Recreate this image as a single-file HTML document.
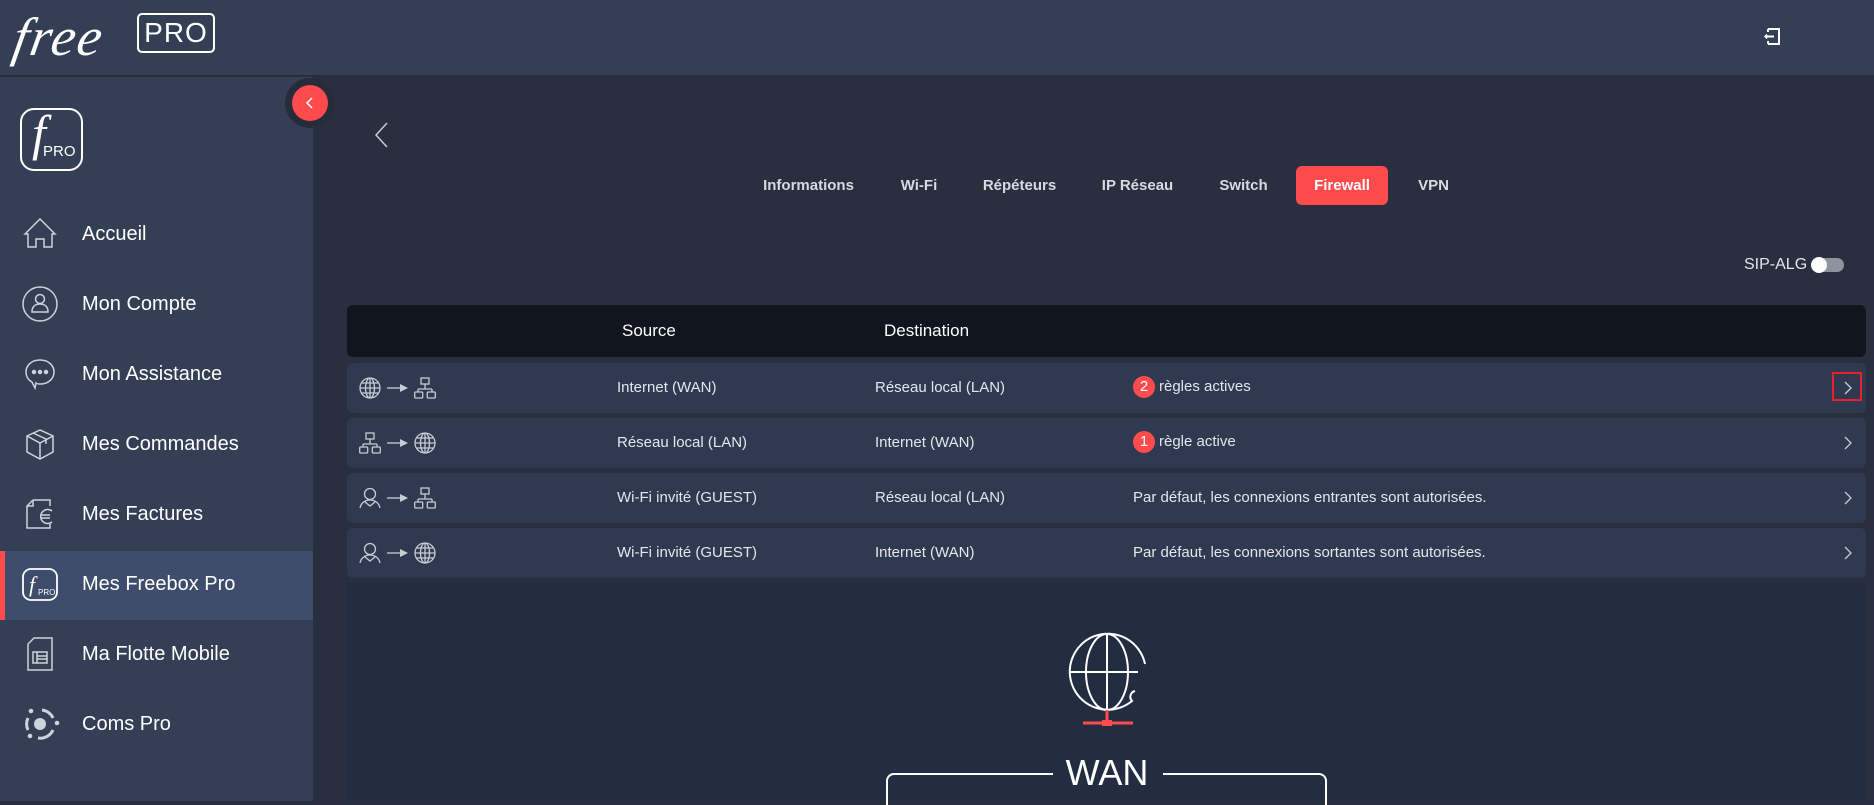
<!DOCTYPE html>
<html><head><meta charset="utf-8"><style>
*{margin:0;padding:0;box-sizing:border-box}
body{width:1874px;height:801px;overflow:hidden;background:#292f3e;font-family:"Liberation Sans",sans-serif;position:relative;color:#fff}
.hdr{position:absolute;left:0;top:0;width:1874px;height:76px;background:#343f56;border-bottom:1px solid #262c3a}
.side{position:absolute;left:0;top:77px;width:313px;height:724px;background:#343f56}
.main{position:absolute;left:313px;top:77px;width:1561px;height:724px;background:#292f3e}
.abs{position:absolute}
.mi{position:absolute;left:0;width:313px;height:70px;display:flex;align-items:center;font-size:20px;color:#fff}
.mi span{position:absolute;left:82px}
.mi svg{position:absolute;left:20px}
.tab{position:absolute;top:166px;height:39px;line-height:39px;font-size:15px;font-weight:bold;color:#d6dae2;text-align:center}
.row{position:absolute;left:347px;width:1519px;height:50px;background:#2f3a51;border-radius:6px;font-size:15px;color:#e3e6ec}
.row .t{position:absolute;top:16px}
.badge{display:inline-block;width:22px;height:22px;border-radius:11px;background:#ff4b4b;color:#fff;text-align:center;line-height:22px;font-size:15px;margin-right:4px}
</style></head><body>
<div class="hdr">
  <div class="abs" style="left:14px;top:6px;font-family:'Liberation Serif',serif;font-style:italic;font-size:54px;color:#fff;letter-spacing:2px;transform:skewX(-10deg)">free</div>
  <div class="abs" style="left:137px;top:13px;width:78px;height:40px;border:2.5px solid #fff;border-radius:5px;font-size:28px;line-height:35px;text-align:center;letter-spacing:1px">PRO</div>
  <svg class="abs" style="left:1764px;top:26px" width="20" height="20" viewBox="0 0 20 20" fill="none" stroke="#fff" stroke-width="2"><path d="M4 3h11v15H4M4 3v3M4 15v3M1 10.5h9"/><path d="M3 8.5l-2 2 2 2" stroke-width="1.5"/></svg>
</div>
<div class="side">
  <div class="abs" style="left:20px;top:31px;width:63px;height:63px;border:2.5px solid #fff;border-radius:14px">
    <div class="abs" style="left:10px;top:-6px;font-family:'Liberation Serif',serif;font-style:italic;font-size:50px">f</div>
    <div class="abs" style="left:21px;top:33px;font-size:15px">PRO</div>
  </div>
  <div class="mi" style="top:122px"><svg width="40" height="40" viewBox="0 0 40 40" fill="none" stroke="#cfd3da" stroke-width="1.5"><path d="M5 20L20 5l15 15h-3v13h-8v-8h-8v8H8V20z"/></svg><span>Accueil</span></div>
  <div class="mi" style="top:192px"><svg width="40" height="40" viewBox="0 0 40 40" fill="none" stroke="#cfd3da" stroke-width="1.5"><circle cx="20" cy="20" r="17"/><circle cx="20" cy="15" r="4.5"/><path d="M12 28c0-6 4-8 8-8s8 2 8 8z"/></svg><span>Mon Compte</span></div>
  <div class="mi" style="top:262px"><svg width="40" height="40" viewBox="0 0 40 40" fill="none" stroke="#cfd3da" stroke-width="1.5"><path d="M20 6c8 0 14 5 14 12s-6 12-14 12c-2 0-3 0-4-1l-1 5-3-6c-4-2-6-6-6-10 0-7 6-12 14-12z"/><circle cx="14" cy="18" r="1.5" fill="#cfd3da"/><circle cx="20" cy="18" r="1.5" fill="#cfd3da"/><circle cx="26" cy="18" r="1.5" fill="#cfd3da"/></svg><span>Mon Assistance</span></div>
  <div class="mi" style="top:332px"><svg width="40" height="40" viewBox="0 0 40 40" fill="none" stroke="#cfd3da" stroke-width="1.5"><path d="M7 12l13-6 13 6v16l-13 7-13-7zM7 12l13 7 13-7M20 19v16M13 9l13 6v5"/></svg><span>Mes Commandes</span></div>
  <div class="mi" style="top:402px"><svg width="40" height="40" viewBox="0 0 40 40" fill="none" stroke="#cfd3da" stroke-width="1.5"><path d="M13 6h17v6M13 6l-6 6v22h23v-4M7 12h6V6"/><path d="M32 17a7 7 0 1 0 0 11M21 21h9M21 24h9"/></svg><span>Mes Factures</span></div>
  <div class="abs" style="left:0;top:474px;width:313px;height:69px;background:#3e4d6b;border-left:5px solid #ff4b4b"></div>
  <div class="mi" style="top:472px"><svg width="40" height="40" viewBox="0 0 40 40" fill="none" stroke="#fff" stroke-width="1.8"><rect x="3" y="5" width="34" height="31" rx="8"/><text x="9" y="28" font-family="Liberation Serif" font-style="italic" font-size="22" fill="#fff" stroke="none">f</text><text x="18" y="31" font-size="8" fill="#fff" stroke="none">PRO</text></svg><span>Mes Freebox Pro</span></div>
  <div class="mi" style="top:542px"><svg width="40" height="40" viewBox="0 0 40 40" fill="none" stroke="#cfd3da" stroke-width="1.5"><path d="M14 4h18v32H8V10z"/><rect x="13" y="18" width="14" height="11"/><path d="M17 18v11M17 22h10M17 25h10"/></svg><span>Ma Flotte Mobile</span></div>
  <div class="mi" style="top:612px"><svg width="40" height="40" viewBox="0 0 40 40" fill="none" stroke="#cfd3da" stroke-width="3"><circle cx="20" cy="20" r="6" fill="#cfd3da" stroke="none"/><path d="M8 14a14 14 0 0 0 0 12M22 6a14 14 0 0 1 11 8M33 26a14 14 0 0 1-15 8"/><circle cx="11" cy="7" r="2.3" fill="#cfd3da" stroke="none"/><circle cx="37" cy="19" r="2.3" fill="#cfd3da" stroke="none"/><circle cx="10" cy="32" r="2.3" fill="#cfd3da" stroke="none"/></svg><span>Coms Pro</span></div>
</div>
<div class="main"></div>
<div class="abs" style="left:285px;top:78px;width:50px;height:50px;border-radius:25px;background:#262c3a"></div>
<div class="abs" style="left:292px;top:85px;width:36px;height:36px;border-radius:18px;background:#ff4b4b"></div>
<svg class="abs" style="left:302px;top:95px" width="16" height="16" viewBox="0 0 16 16" fill="none" stroke="#fff" stroke-width="1.5"><path d="M10 3L5 8l5 5"/></svg>
<svg class="abs" style="left:372px;top:121px" width="20" height="28" viewBox="0 0 20 28" fill="none" stroke="#c8ccd4" stroke-width="1.5"><path d="M15 2L4 14l11 12"/></svg>
<div class="tab" style="left:755px;width:107px">Informations</div>
<div class="tab" style="left:892px;width:54px">Wi-Fi</div>
<div class="tab" style="left:976px;width:87px">Répéteurs</div>
<div class="tab" style="left:1094px;width:87px">IP Réseau</div>
<div class="tab" style="left:1211px;width:65px">Switch</div>
<div class="tab" style="left:1296px;width:92px;background:#ff4b4b;border-radius:6px;color:#fff">Firewall</div>
<div class="tab" style="left:1409px;width:49px">VPN</div>
<div class="abs" style="left:1744px;top:256px;font-size:16px;color:#e3e6ec">SIP-ALG</div>
<div class="abs" style="left:1812px;top:258px;width:32px;height:14px;border-radius:7px;background:#8e939e"></div>
<div class="abs" style="left:1811px;top:257px;width:16px;height:16px;border-radius:8px;background:#fff"></div>
<div class="abs" style="left:347px;top:305px;width:1519px;height:52px;background:#11151e;border-radius:6px;font-size:17px">
  <div class="abs" style="left:275px;top:16px">Source</div>
  <div class="abs" style="left:537px;top:16px">Destination</div>
</div>
<svg width="0" height="0" style="position:absolute"><defs>
<g id="gl" fill="none" stroke="#c8ccd4" stroke-width="1.3"><circle cx="11" cy="11" r="10"/><ellipse cx="11" cy="11" rx="4.5" ry="10"/><path d="M1 11h20M3 6h16M3 16h16M11 1v20"/></g>
<g id="ln" fill="none" stroke="#c8ccd4" stroke-width="1.3"><rect x="7" y="1" width="8" height="6"/><path d="M11 7v5M4 12h14M4 12v3M18 12v3"/><rect x="0.7" y="15" width="8" height="6" rx="1"/><rect x="13.3" y="15" width="8" height="6" rx="1"/></g>
<g id="us" fill="none" stroke="#c8ccd4" stroke-width="1.3"><circle cx="11" cy="7" r="5.5"/><path d="M1 21c1-5 5-8 10-8s9 3 10 8M6 15l5 4 5-4"/></g>
<g id="ar"><path d="M0 11h15" stroke="#c8ccd4" stroke-width="1.3"/><path d="M13 7l8 4-8 4z" fill="#c8ccd4"/></g>
</defs></svg>
<div class="row" style="top:363px"><svg class="abs" style="left:12px;top:14px" width="80" height="22"><use href="#gl"/><use href="#ar" x="28"/><use href="#ln" x="55"/></svg><div class="t" style="left:270px">Internet (WAN)</div><div class="t" style="left:528px">Réseau local (LAN)</div><div class="t" style="left:786px;top:13px"><span class="badge">2</span>règles actives</div></div>
<div class="row" style="top:418px"><svg class="abs" style="left:12px;top:14px" width="80" height="22"><use href="#ln"/><use href="#ar" x="28"/><use href="#gl" x="55"/></svg><div class="t" style="left:270px">Réseau local (LAN)</div><div class="t" style="left:528px">Internet (WAN)</div><div class="t" style="left:786px;top:13px"><span class="badge">1</span>règle active</div></div>
<div class="row" style="top:473px"><svg class="abs" style="left:12px;top:14px" width="80" height="22"><use href="#us"/><use href="#ar" x="28"/><use href="#ln" x="55"/></svg><div class="t" style="left:270px">Wi-Fi invité (GUEST)</div><div class="t" style="left:528px">Réseau local (LAN)</div><div class="t" style="left:786px">Par défaut, les connexions entrantes sont autorisées.</div></div>
<div class="row" style="top:528px"><svg class="abs" style="left:12px;top:14px" width="80" height="22"><use href="#us"/><use href="#ar" x="28"/><use href="#gl" x="55"/></svg><div class="t" style="left:270px">Wi-Fi invité (GUEST)</div><div class="t" style="left:528px">Internet (WAN)</div><div class="t" style="left:786px">Par défaut, les connexions sortantes sont autorisées.</div></div>
<svg class="abs" style="left:1842px;top:380px" width="12" height="16" fill="none" stroke="#c8ccd4" stroke-width="1.3"><path d="M3 2l6 6-6 6"/></svg>
<div class="abs" style="left:1832px;top:372px;width:30px;height:29px;border:2px solid #e8202a"></div>
<svg class="abs" style="left:1842px;top:435px" width="12" height="16" fill="none" stroke="#c8ccd4" stroke-width="1.3"><path d="M3 2l6 6-6 6"/></svg>
<svg class="abs" style="left:1842px;top:490px" width="12" height="16" fill="none" stroke="#c8ccd4" stroke-width="1.3"><path d="M3 2l6 6-6 6"/></svg>
<svg class="abs" style="left:1842px;top:545px" width="12" height="16" fill="none" stroke="#c8ccd4" stroke-width="1.3"><path d="M3 2l6 6-6 6"/></svg>
<div class="abs" style="left:347px;top:583px;width:1519px;height:218px;background:#232d42"></div>
<svg class="abs" style="left:1060px;top:625px" width="100" height="110" viewBox="0 0 100 110" fill="none" stroke="#fff" stroke-width="2"><path d="M85 39A38 38 0 1 0 72 76A6 6 0 0 1 75 66"/><ellipse cx="47" cy="47" rx="21" ry="38"/><path d="M47 9v76M9 47h69"/><path d="M47 85v13" stroke="#ff4b4b" stroke-width="3"/><path d="M23 98h50" stroke="#ff4b4b" stroke-width="3"/><rect x="42" y="95" width="10" height="6" fill="#ff4b4b" stroke="none"/></svg>
<div class="abs" style="left:1060px;top:752px;width:94px;text-align:center;font-size:36px;color:#fff">WAN</div>
<svg class="abs" style="left:880px;top:765px" width="460" height="40" fill="none" stroke="#fff" stroke-width="2"><path d="M173 9H14a7 7 0 0 0-7 7v30M283 9h156a7 7 0 0 1 7 7v30"/></svg>
</body></html>
